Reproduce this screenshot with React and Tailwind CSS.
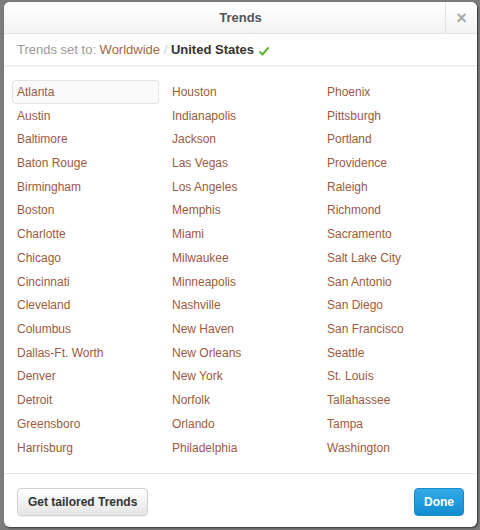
import React from "react";

const cols = [
  ["Atlanta", "Austin", "Baltimore", "Baton Rouge", "Birmingham", "Boston", "Charlotte", "Chicago", "Cincinnati", "Cleveland", "Columbus", "Dallas-Ft. Worth", "Denver", "Detroit", "Greensboro", "Harrisburg"],
  ["Houston", "Indianapolis", "Jackson", "Las Vegas", "Los Angeles", "Memphis", "Miami", "Milwaukee", "Minneapolis", "Nashville", "New Haven", "New Orleans", "New York", "Norfolk", "Orlando", "Philadelphia"],
  ["Phoenix", "Pittsburgh", "Portland", "Providence", "Raleigh", "Richmond", "Sacramento", "Salt Lake City", "San Antonio", "San Diego", "San Francisco", "Seattle", "St. Louis", "Tallahassee", "Tampa", "Washington"],
];

export default function App() {
  return (
    <div className="w-[480px] h-[530px] bg-[#7c7c7c] pt-[2px] pl-[4px] overflow-hidden" style={{ fontFamily: '"Liberation Sans", Arial, sans-serif' }}>
      <div className="w-[473px] h-[525px] bg-white rounded-[6px] shadow-[1px_1px_2px_rgba(0,0,0,0.6)] flex flex-col overflow-hidden">
        {/* header */}
        <div className="h-[32px] flex items-center bg-gradient-to-b from-white to-[#f3f3f3] border-b border-[#e2e2e2]">
          <div className="flex-1 text-center text-[13px] font-bold text-[#555] pl-[32px]">Trends</div>
          <div className="w-[32px] h-full flex items-center justify-center border-l border-[#e2e2e2] text-[#aaa] text-[18px] font-bold leading-none">×</div>
        </div>

        {/* trends set to */}
        <div className="h-[33px] flex items-center pl-[13px] text-[13px] border-b-2 border-[#eeeeee]">
          <span className="text-[#999]">Trends set to:&nbsp;</span>
          <span className="text-[#a2674a]">Worldwide</span>
          <span className="text-[#ccc]">&nbsp;/&nbsp;</span>
          <span className="font-bold text-[#333]">United States</span>
          <svg width="12" height="12" viewBox="0 0 12 12" className="ml-[4px] mt-[2px]">
            <path d="M1.5 6.5 L4.5 9.5 L10.5 2.5" fill="none" stroke="#5cb82e" strokeWidth="2" />
          </svg>
        </div>

        {/* list */}
        <div className="flex-1 flex pt-[13px] pl-[8px]">
          {cols.map((col, ci) => (
            <div key={ci} className="w-[155px] flex flex-col">
              {col.map((c, i) => (
                <div
                  key={c}
                  className={
                    "w-[147px] h-[23.73px] flex items-center pl-[4px] text-[12px] text-[#9c5a40] rounded-[3px] border " +
                    (ci === 0 && i === 0 ? "border-[#e4e4e4] bg-[#fafafa]" : "border-transparent")
                  }
                >
                  {c}
                </div>
              ))}
            </div>
          ))}
        </div>

        {/* footer */}
        <div className="h-[54px] border-t border-[#e8e8e8] flex items-start justify-between pt-[14px] pl-[13px] pr-[13px]">
          <button className="h-[28px] px-[10px] rounded-[4px] border border-[#d0d0d0] bg-gradient-to-b from-white to-[#e5e5e5] text-[12px] font-bold text-[#333] shadow-[0_1px_0_rgba(0,0,0,0.05)]">
            Get tailored Trends
          </button>
          <button className="h-[28px] w-[50px] rounded-[4px] border border-[#1a8ac8] bg-gradient-to-b from-[#33a9e6] to-[#0f8dd2] text-[12px] font-bold text-white">
            Done
          </button>
        </div>
      </div>
    </div>
  );
}
